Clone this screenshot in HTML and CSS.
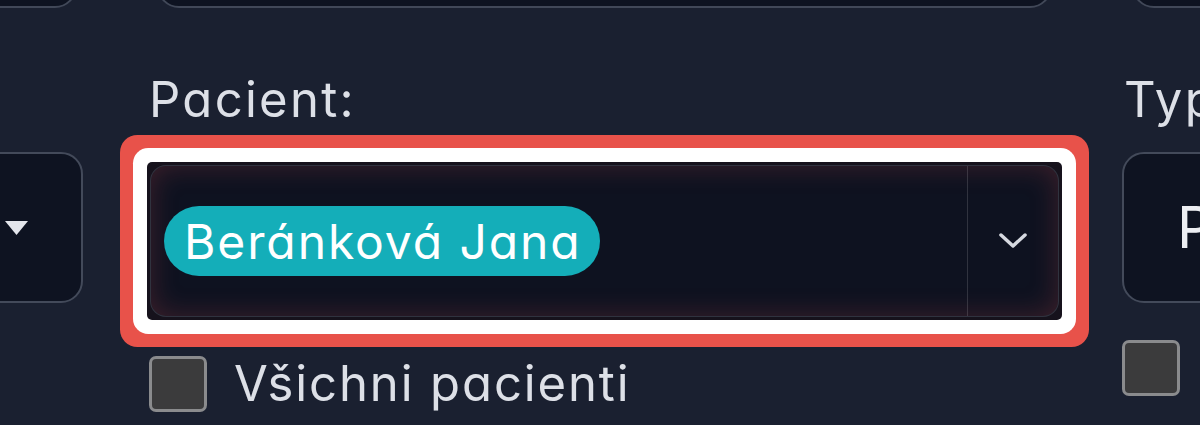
FILE: index.html
```html
<!DOCTYPE html>
<html lang="cs">
<head>
<meta charset="utf-8">
<title>Pacient</title>
<link rel="stylesheet" href="styles.css">
</head>
<body>
<div class="top-row">
  <div class="top-box tb-left"></div>
  <div class="top-box tb-mid"></div>
  <div class="top-box tb-right"></div>
</div>
<div class="fields">
  <div class="field f1">
    <div class="label">&nbsp;</div>
    <div class="box box-left">
      <svg class="tri" width="25" height="16" viewBox="0 0 25 16"><path d="M1 1 H24 L12.5 15 Z" fill="#e4e6ec"/></svg>
    </div>
  </div>
  <div class="field f2">
    <div class="label">Pacient:</div>
    <div class="select-ring">
      <div class="select">
        <div class="value"><span class="pill">Beránková Jana</span></div>
        <div class="toggle">
          <svg width="28" height="18" viewBox="0 0 28 18"><path d="M2 3 L14 14 L26 3" fill="none" stroke="#d6d9e0" stroke-width="3.5" stroke-linecap="round" stroke-linejoin="round"/></svg>
        </div>
      </div>
    </div>
    <label class="check check-f2"><span class="cb"></span><span class="check-text">Všichni pacienti</span></label>
  </div>
  <div class="field f3">
    <div class="label">Typ</div>
    <div class="box box-right"><span class="box-text">P</span></div>
    <label class="check check-f3"><span class="cb"></span></label>
  </div>
</div>
</body>
</html>
```
FILE: styles.css
```css
html, body {
  margin: 0;
  padding: 0;
}
body {
  width: 1200px;
  height: 425px;
  overflow: hidden;
  background: #1a2030;
  font-family: Inter, "Noto Sans", sans-serif;
  font-feature-settings: "cv11" 1;
  color: #dcdfe6;
}
.top-row {
  display: flex;
  margin-top: -60px;
  margin-left: -100px;
  height: 68px;
}
.top-box {
  box-sizing: border-box;
  height: 68px;
  background: #0e1321;
  border: 2px solid #414858;
  border-radius: 22px;
  flex: none;
}
.tb-left { width: 177px; }
.tb-mid { width: 895px; margin-left: 80px; }
.tb-right { width: 200px; margin-left: 80px; }

.fields {
  display: grid;
  grid-template-columns: 183px 915px 220px;
  column-gap: 64px;
  margin-left: -100px;
  margin-top: 62px;
}
.f3 { margin-left: -4px; }
.field {
  display: flex;
  flex-direction: column;
  align-items: flex-start;
}
.label {
  font-size: 49px;
  line-height: 60px;
  height: 60px;
  padding-left: 2px;
  letter-spacing: 2.3px;
  color: #dde0e7;
  white-space: nowrap;
}
.box {
  box-sizing: border-box;
  height: 151px;
  margin-top: 22px;
  background: #0e1321;
  border: 2px solid #434a5a;
  border-radius: 22px;
  display: flex;
  align-items: center;
}
.box-left {
  width: 183px;
  justify-content: flex-end;
  padding-right: 52px;
}
.tri { display: block; }
.box-right {
  width: 260px;
  padding-left: 53px;
}
.box-text {
  font-size: 57px;
  color: #eceef2;
}

.select-ring {
  box-sizing: border-box;
  width: 915px;
  height: 158px;
  margin-top: 32px;
  background: #16121c;
  border-radius: 5px;
  box-shadow: 0 0 0 14px #ffffff, 0 0 0 27px #e8524a;
  padding: 3px;
}
.select {
  box-sizing: border-box;
  height: 100%;
  display: flex;
  border: 1.5px solid rgba(255, 255, 255, 0.14);
  border-radius: 16px;
  background: #0e1220;
  box-shadow: inset 0 0 28px rgba(220, 80, 80, 0.24);
}
.value {
  flex: 1;
  display: flex;
  align-items: center;
  padding-left: 13px;
  border-right: 1.5px solid rgba(255, 255, 255, 0.14);
}
.pill {
  display: inline-flex;
  align-items: center;
  height: 70px;
  padding: 0 18px 0 20px;
  border-radius: 35px;
  background: #14aeb9;
  color: #ffffff;
  font-size: 48px;
  letter-spacing: 1.9px;
  white-space: nowrap;
}
.toggle {
  width: 90px;
  display: flex;
  align-items: center;
  justify-content: center;
}
.toggle svg { display: block; }

.check {
  display: flex;
  align-items: center;
  gap: 27px;
}
.check-f2 {
  margin-top: 34px;
  margin-left: 2px;
}
.check-f3 {
  margin-top: 37px;
}
.cb {
  box-sizing: border-box;
  width: 58px;
  height: 56px;
  background: #3b3b3c;
  border: 3px solid #8a8b8d;
  border-radius: 7px;
  flex: none;
}
.check-text {
  font-size: 49px;
  line-height: 60px;
  letter-spacing: 1.9px;
  color: #dde0e7;
  white-space: nowrap;
}
```
